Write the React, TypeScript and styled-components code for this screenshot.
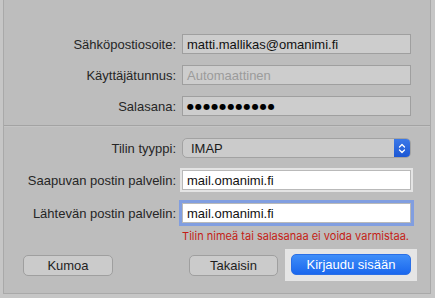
import styled, { createGlobalStyle } from "styled-components";

const GlobalStyle = createGlobalStyle`
  html, body {
    margin: 0;
    padding: 0;
    background: #c6c6c6;
    font-family: "Liberation Sans", Arial, sans-serif;
    -webkit-font-smoothing: antialiased;
  }
`;

const Page = styled.div`
  width: 435px;
  height: 298px;
  overflow: hidden;
  display: flex;
`;

const Sheet = styled.div`
  margin-left: 3px;
  width: 426px;
  height: 293px;
  background: #bdbdbd;
  border: 1px solid #a9a9a9;
  border-top: none;
  display: flex;
  flex-direction: column;
`;

const Section = styled.div<{ $top: number }>`
  display: flex;
  flex-direction: column;
  gap: 11px;
  padding-top: ${p => p.$top}px;
`;

const Row = styled.div<{ $height?: number }>`
  display: flex;
  align-items: center;
  height: ${p => p.$height ?? 20}px;
`;

const Label = styled.label`
  width: 172px;
  margin-right: 6px;
  text-align: right;
  font-size: 13px;
  color: #262626;
  white-space: nowrap;
`;

const Field = styled.div<{ $variant?: "plain" | "white" | "focus" }>`
  box-sizing: border-box;
  width: 229px;
  height: 20px;
  padding: 0 4px;
  display: flex;
  align-items: center;
  font-size: 13px;
  color: #111;
  white-space: nowrap;
  background: ${p => (p.$variant === "white" || p.$variant === "focus" ? "#ffffff" : "#cdcdcd")};
  border: 1px solid ${p => (p.$variant === "white" || p.$variant === "focus" ? "#b9b9b9" : "#9f9f9f")};
  box-shadow: ${p =>
    p.$variant === "white"
      ? "0 0 0 2px #e4e4e4"
      : p.$variant === "focus"
      ? "0 0 0 3px #819ee0"
      : "none"};
`;

const Placeholder = styled.span`
  color: #9b9b9b;
`;

const Dots = styled.span`
  font-family: "DejaVu Sans", sans-serif;
  font-size: 8px;
  letter-spacing: 1.1px;
  color: #000;
`;

const Separator = styled.div`
  margin-top: 9px;
  height: 1px;
  background: #a3a3a3;
  border-bottom: 1px solid #c4c4c4;
`;

const Popup = styled.div`
  box-sizing: border-box;
  width: 229px;
  height: 20px;
  display: flex;
  align-items: stretch;
  border: 1px solid #a2a2a2;
  border-radius: 5px;
  background: #cbcbcb;
  overflow: hidden;
`;

const PopupValue = styled.div`
  flex: 1;
  display: flex;
  align-items: center;
  padding-left: 8px;
  font-size: 13px;
  color: #1a1a1a;
`;

const Stepper = styled.div`
  width: 16px;
  background: linear-gradient(#3a78e8, #1c57d4);
  display: flex;
  align-items: center;
  justify-content: center;
`;

const ErrorText = styled.div`
  margin-top: 5px;
  padding-right: 21px;
  text-align: right;
  font-family: Inter, "Liberation Sans", sans-serif;
  font-size: 11px;
  color: #c41d16;
`;

const ButtonBar = styled.div`
  margin-top: 6px;
  display: flex;
  align-items: center;
  padding-left: 19px;
`;

const Button = styled.button<{ $width: number; $primary?: boolean }>`
  box-sizing: border-box;
  width: ${p => p.$width}px;
  height: 21px;
  border-radius: 5px;
  font-family: inherit;
  font-size: 13px;
  padding: 0;
  color: ${p => (p.$primary ? "#ffffff" : "#1e1e1e")};
  background: ${p => (p.$primary ? "linear-gradient(#3f8ef8, #1a67ee)" : "#cbcbcb")};
  border: 1px solid ${p => (p.$primary ? "#2a6fe6" : "#9f9f9f")};
`;

const Spacer = styled.div`
  flex: 1;
`;

const Highlight = styled.div`
  margin-left: 7px;
  margin-right: 13px;
  padding: 5px 6px 6px;
  background: #e5e5e5;
  display: flex;
`;

export default function App() {
  return (
    <>
      <GlobalStyle />
      <Page>
        <Sheet>
          <Section $top={34}>
            <Row>
              <Label>Sähköpostiosoite:</Label>
              <Field>matti.mallikas@omanimi.fi</Field>
            </Row>
            <Row>
              <Label>Käyttäjätunnus:</Label>
              <Field>
                <Placeholder>Automaattinen</Placeholder>
              </Field>
            </Row>
            <Row>
              <Label>Salasana:</Label>
              <Field>
                <Dots>●●●●●●●●●●●</Dots>
              </Field>
            </Row>
          </Section>
          <Separator />
          <Section $top={11}>
            <Row>
              <Label>Tilin tyyppi:</Label>
              <Popup>
                <PopupValue>IMAP</PopupValue>
                <Stepper>
                  <svg width="8" height="13" viewBox="0 0 8 13" fill="none" stroke="#fff" strokeWidth="1.3" strokeLinecap="round" strokeLinejoin="round">
                    <path d="M1.5 5 L4 2.5 L6.5 5" />
                    <path d="M1.5 8 L4 10.5 L6.5 8" />
                  </svg>
                </Stepper>
              </Popup>
            </Row>
            <Row $height={22}>
              <Label>Saapuvan postin palvelin:</Label>
              <Field $variant="white">mail.omanimi.fi</Field>
            </Row>
            <Row $height={22}>
              <Label>Lähtevän postin palvelin:</Label>
              <Field $variant="focus">mail.omanimi.fi</Field>
            </Row>
          </Section>
          <ErrorText>Tilin nimeä tai salasanaa ei voida varmistaa.</ErrorText>
          <ButtonBar>
            <Button $width={90}>Kumoa</Button>
            <Spacer />
            <Button $width={89}>Takaisin</Button>
            <Highlight>
              <Button $width={120} $primary>
                Kirjaudu sisään
              </Button>
            </Highlight>
          </ButtonBar>
        </Sheet>
      </Page>
    </>
  );
}
